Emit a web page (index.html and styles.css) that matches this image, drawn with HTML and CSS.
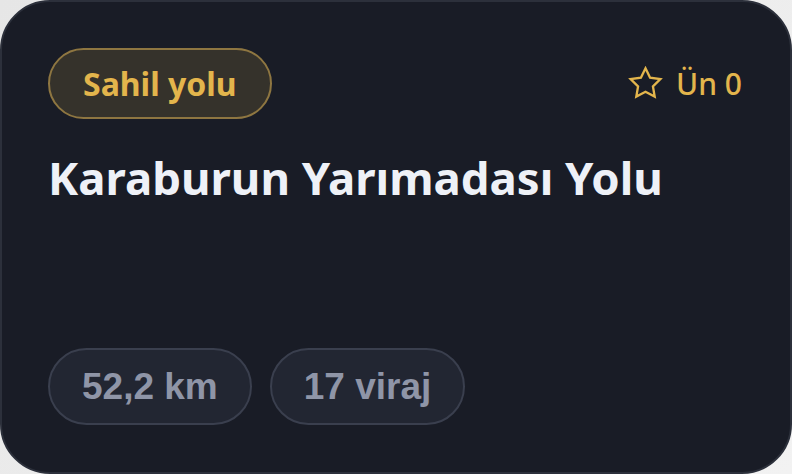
FILE: index.html
```html
<!DOCTYPE html>
<html lang="tr">
<head>
<meta charset="utf-8">
<title>Karaburun Yarımadası Yolu</title>
<link rel="stylesheet" href="styles.css">
</head>
<body>
<article class="card">
  <header class="card-head">
    <span class="badge">Sahil yolu</span>
    <span class="rating">
      <svg class="star" viewBox="0 0 24 24" width="35" height="35" aria-hidden="true">
        <path d="M12 1.6l3.15 6.4 7.05 1.02-5.1 4.98 1.2 7.02L12 17.7l-6.3 3.32 1.2-7.02-5.1-4.98 7.05-1.02z" fill="none" stroke="currentColor" stroke-width="1.6" stroke-linejoin="miter"/>
      </svg>
      <span class="rating-text">Ün 0</span>
    </span>
  </header>
  <h1 class="title">Karaburun Yarımadası Yolu</h1>
  <footer class="stats">
    <span class="pill">52,2 km</span>
    <span class="pill">17 viraj</span>
  </footer>
</article>
</body>
</html>
```

FILE: styles.css
```css
* { box-sizing: border-box; }
html, body { margin: 0; padding: 0; }
body {
  width: 792px;
  height: 474px;
  background: linear-gradient(135deg, #e6e6e6, #f2f2f2);
  font-family: "Noto Sans", Roboto, sans-serif;
}
.card {
  width: 792px;
  height: 474px;
  background: #191c26;
  border: 2px solid #2c303b;
  border-radius: 50px;
  padding: 46px 48px 47px 46px;
  display: flex;
  flex-direction: column;
}
.card-head {
  display: flex;
  justify-content: space-between;
  align-items: center;
}
.badge {
  display: inline-block;
  border: 2px solid #8e7641;
  background: #35322b;
  color: #e3b54c;
  font-weight: 700;
  font-size: 32px;
  line-height: 37px;
  padding: 15px 33px;
  border-radius: 999px;
}
.rating {
  display: flex;
  align-items: center;
  gap: 13px;
  color: #e3b54c;
}
.star { display: block; }
.rating-text {
  font-size: 30px;
  font-weight: 500;
  line-height: 34px;
}
.title {
  margin: 30px 0 0 0;
  color: #eef1f7;
  font-size: 45.5px;
  font-weight: 700;
  line-height: 56px;
}
.stats {
  margin-top: auto;
  display: flex;
  gap: 18px;
}
.pill {
  display: inline-block;
  border: 2px solid #3a3f4e;
  background: #222632;
  color: #8f95a7;
  font-family: "Liberation Sans", Arial, sans-serif;
  font-weight: 700;
  font-size: 37px;
  line-height: 41px;
  padding: 16px 32px;
  border-radius: 999px;
}
```
